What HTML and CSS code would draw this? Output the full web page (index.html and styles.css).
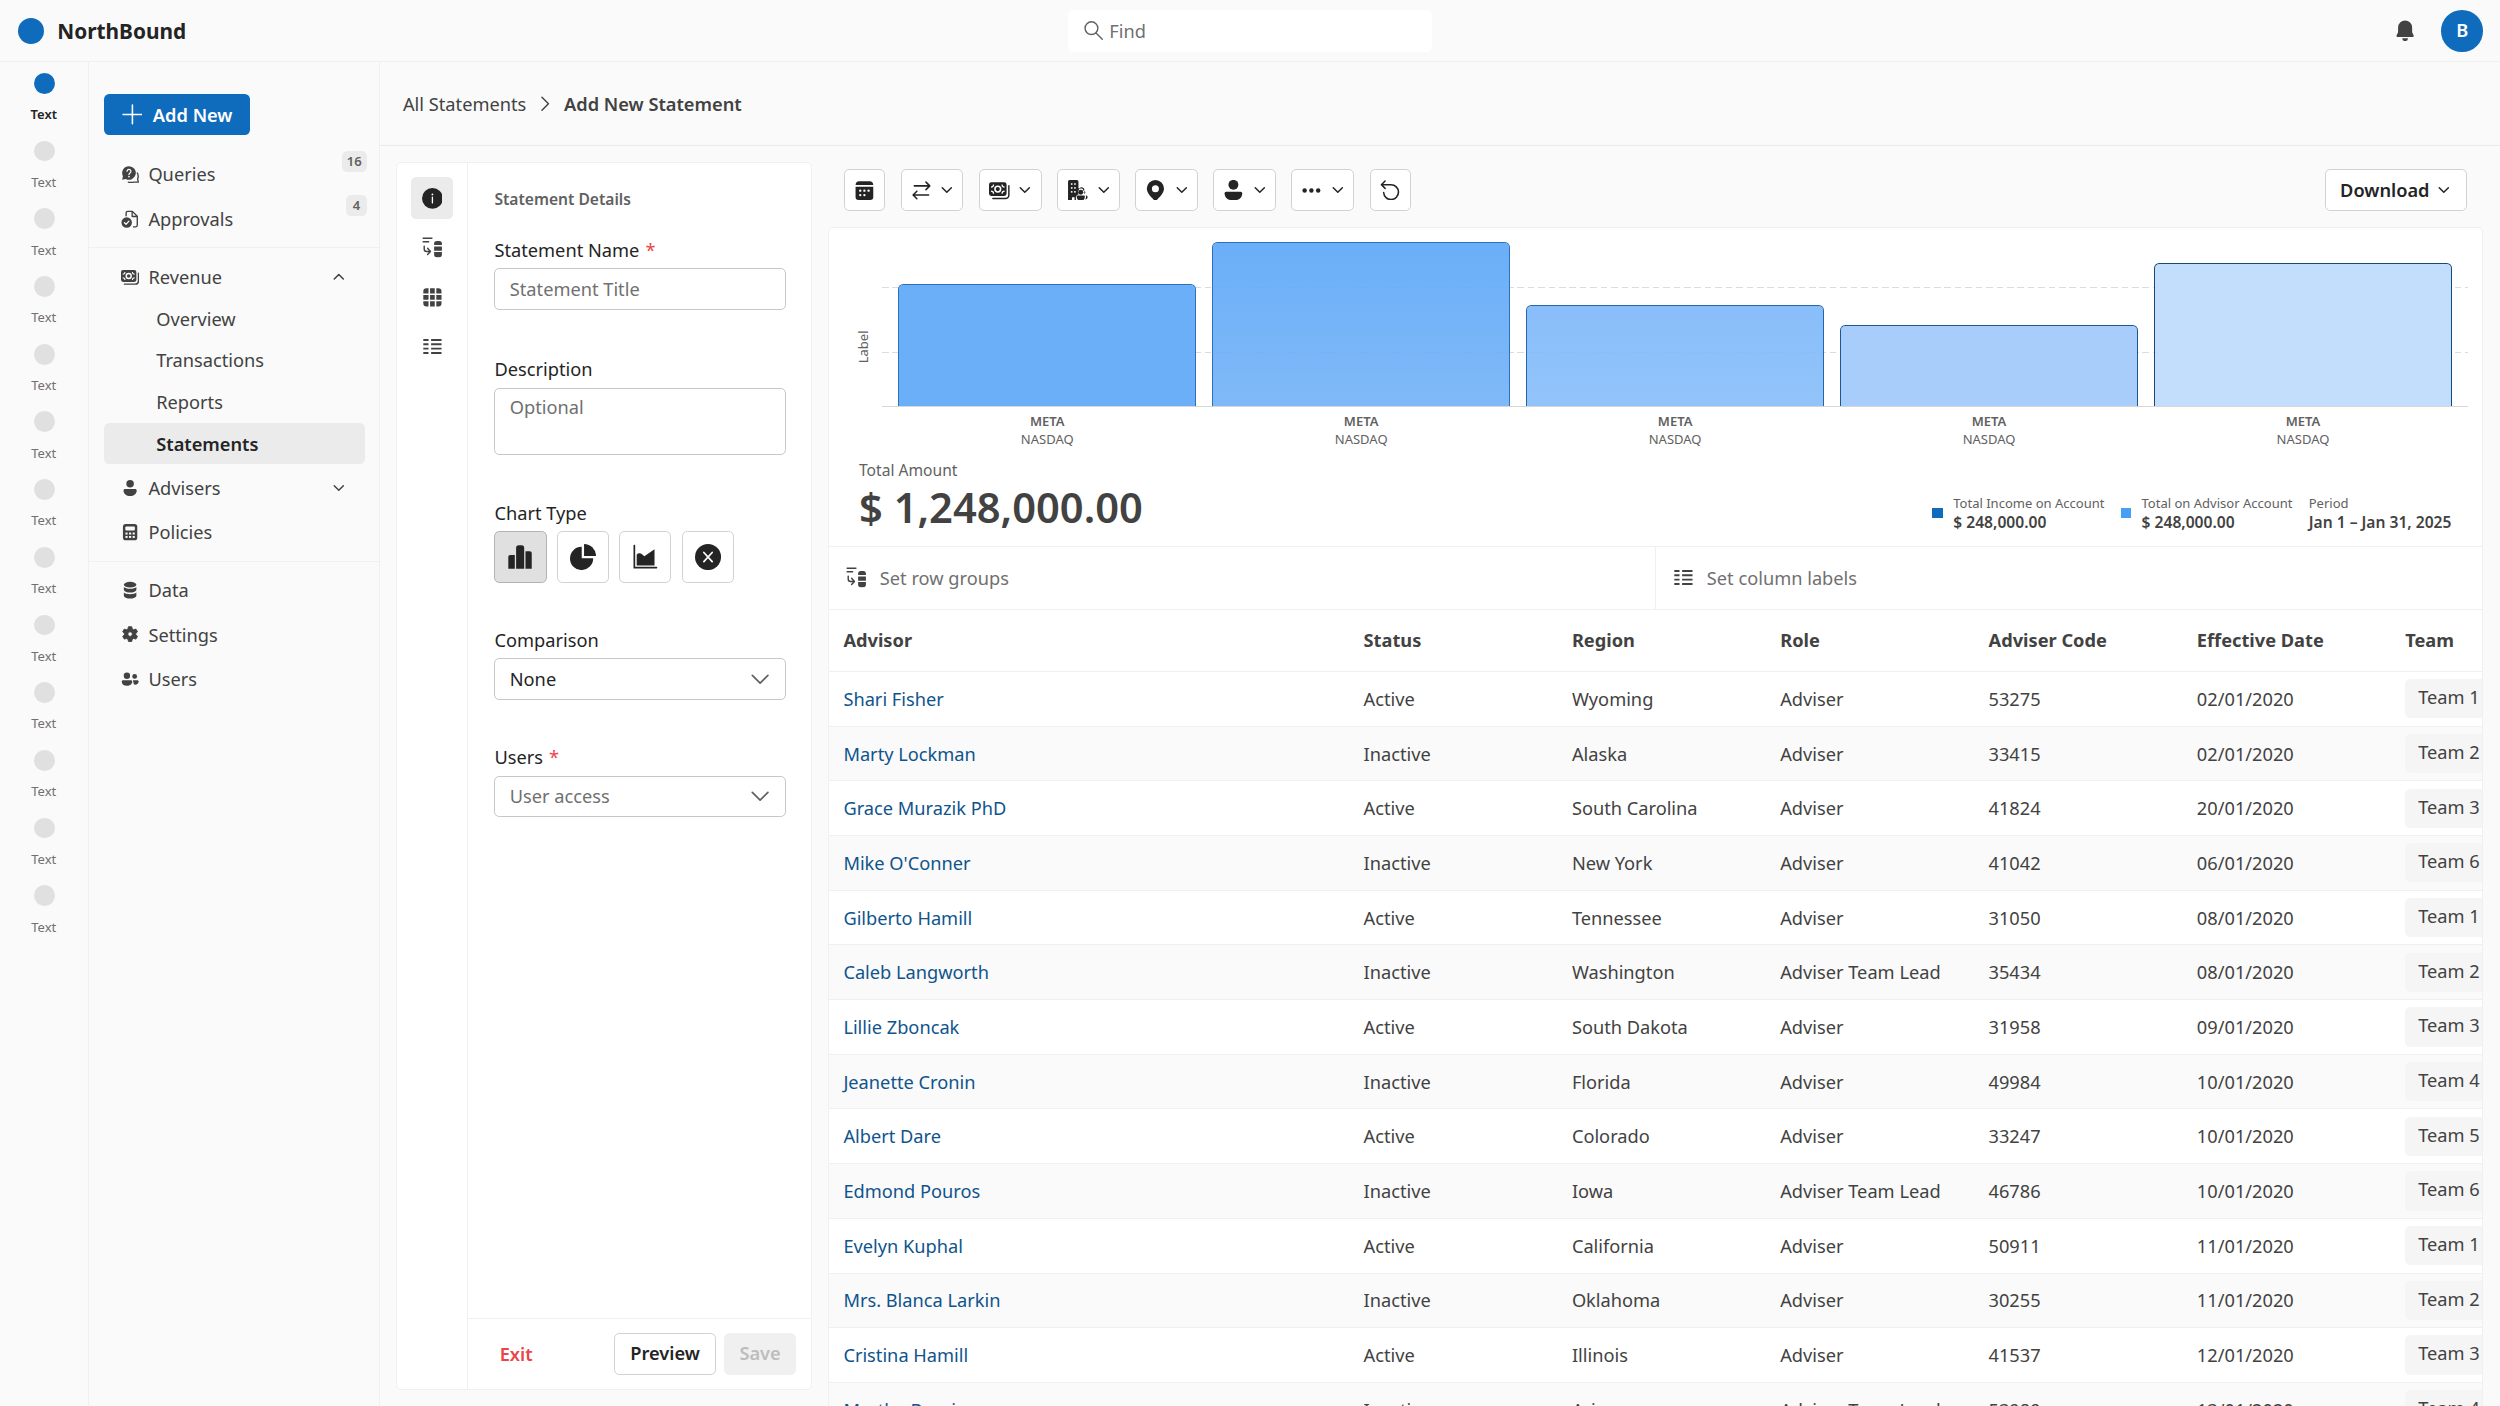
FILE: index.html
```html
<!DOCTYPE html>
<html lang="en">
<head>
    <meta charset="UTF-8">
    <meta name="viewport" content="width=device-width, initial-scale=1.0">
    <title>NorthBound - Add New Statement</title>
    <link rel="stylesheet" href="styles.css">
</head>
<body>
    <!-- Icon sprite -->
    <svg class="sprite" xmlns="http://www.w3.org/2000/svg">
        <symbol id="i-down" viewBox="0 0 12 12"><path d="M2.500 4.400l3.500 3.500 3.500-3.500" fill="none" stroke="currentColor" stroke-width="1.150" stroke-linecap="round" stroke-linejoin="round"/></symbol>
        <symbol id="i-up" viewBox="0 0 12 12"><path d="M2.500 7.700l3.500-3.500 3.500 3.500" fill="none" stroke="currentColor" stroke-width="1.150" stroke-linecap="round" stroke-linejoin="round"/></symbol>
        <symbol id="i-query" viewBox="0 0 16 16">
            <path d="M7 1a6 6 0 0 0-5.300 8.800L1 13l3.200-.7A6 6 0 1 0 7 1z"/>
            <path d="M6 15c3.500.6 7-.2 9.200 0l-.6-2.600c.6-1.500.6-4-.4-5.800" fill="none" stroke="currentColor" stroke-width="1.200" stroke-linejoin="round"/>
            <path d="M5.300 5.500a1.700 1.700 0 1 1 2.600 1.500c-.6.4-.9.700-.9 1.300" fill="none" stroke="#fafafa" stroke-width="1.100" stroke-linecap="round"/>
            <circle cx="7" cy="10.200" r=".75" fill="#fafafa"/>
        </symbol>
        <symbol id="i-approve" viewBox="0 0 16 16">
            <path d="M4.500 5.500V2.500c0-.8.6-1.300 1.300-1.300h4.200l4.300 4.300v8c0 .8-.6 1.300-1.300 1.300h-2.500M9.800 1.500v4.200h4.200" fill="none" stroke="currentColor" stroke-width="1.200" stroke-linejoin="round"/>
            <circle cx="5" cy="11" r="4.600"/>
            <path d="M3 11.200l1.400 1.300 2.600-2.700" fill="none" stroke="#fafafa" stroke-width="1.100" stroke-linecap="round" stroke-linejoin="round"/>
        </symbol>
        <symbol id="i-money" viewBox="0 0 16 16">
            <rect x="0" y="1.800" width="13.500" height="10.400" rx="1.800"/>
            <path d="M15.300 4.500v7a2.700 2.700 0 0 1-2.700 2.700H3" fill="none" stroke="currentColor" stroke-width="1.200" stroke-linecap="round"/>
            <circle cx="6.750" cy="7" r="2.800" fill="#fff"/>
            <circle cx="6.750" cy="7" r="1.600"/>
            <path d="M1.500 5.500a2 2 0 0 0 2-2M10 3.500a2 2 0 0 0 2 2M1.500 8.500a2 2 0 0 1 2 2M10 10.500a2 2 0 0 1 2-2" fill="none" stroke="#fff" stroke-width=".9"/>
        </symbol>
        <symbol id="i-person" viewBox="0 0 16 16"><circle cx="8" cy="4.200" r="3.300"/><path d="M3.600 8.700h8.800c.8 0 1.400.6 1.400 1.400 0 3-2.600 4.900-5.800 4.900s-5.800-1.900-5.800-4.900c0-.8.6-1.400 1.400-1.400z"/></symbol>
        <symbol id="i-calc" viewBox="0 0 16 16">
            <rect x="1.700" y=".8" width="12.600" height="14.400" rx="2.500"/>
            <rect x="3.800" y="3" width="8.400" height="3.600" rx="1" fill="#fafafa"/>
            <g fill="#fafafa"><rect x="3.900" y="8.400" width="1.900" height="1.700"/><rect x="7.050" y="8.400" width="1.900" height="1.700"/><rect x="10.200" y="8.400" width="1.900" height="1.700"/><rect x="3.900" y="11.400" width="1.900" height="1.700"/><rect x="7.050" y="11.400" width="1.900" height="1.700"/><rect x="10.200" y="11.400" width="1.900" height="1.700"/></g>
        </symbol>
        <symbol id="i-data" viewBox="0 0 16 16">
            <ellipse cx="8" cy="3.200" rx="5.500" ry="2.500"/>
            <path d="M2.500 5.200c1 1 3 1.600 5.500 1.600s4.500-.6 5.500-1.600v2.500c0 1.400-2.500 2.500-5.500 2.500s-5.500-1.100-5.500-2.500z"/>
            <path d="M2.500 10.100c1 1 3 1.500 5.500 1.500s4.500-.5 5.500-1.500v2.800c0 1.400-2.500 2.500-5.500 2.500s-5.500-1.100-5.500-2.500z"/>
        </symbol>
        <symbol id="i-gear" viewBox="0 0 16 16">
            <path fill-rule="evenodd" d="M6.600 1.500h2.800l.5 2 1.200.7 2-.6 1.400 2.400-1.500 1.400v1.200l1.500 1.400-1.400 2.400-2-.6-1.200.7-.5 2H6.600l-.5-2-1.200-.7-2 .6L1.500 10 3 8.600V7.400L1.500 6l1.400-2.400 2 .6 1.200-.7zM8 6a2 2 0 1 0 0 4 2 2 0 0 0 0-4z" stroke="currentColor" stroke-width=".8" stroke-linejoin="round"/>
        </symbol>
        <symbol id="i-people" viewBox="0 0 16 16">
            <circle cx="5.200" cy="5" r="2.800"/><circle cx="12" cy="5.600" r="2.100"/>
            <path d="M1.800 8.900h6.900c.7 0 1.200.5 1.200 1.200 0 2.400-2 3.700-4.700 3.700S.6 12.500.6 10.100c0-.7.500-1.200 1.200-1.200zM10.500 8.900h3.800c.7 0 1.200.5 1.200 1.200 0 2-1.700 3.200-4.200 2.700z"/>
        </symbol>
        <symbol id="i-rows" viewBox="0 0 16 16">
            <path d="M.5 1h7.500M.5 3.700h5" fill="none" stroke="currentColor" stroke-width="1.100"/>
            <path d="M1.700 7v2.200c0 1.200.7 1.900 1.900 1.900H6M4.300 8.700l2.200 2.400-2.200 2.400" fill="none" stroke="currentColor" stroke-width="1.100" stroke-linecap="round" stroke-linejoin="round"/>
            <path d="M9.300 6.200V5a2 2 0 0 1 2-2h2a2 2 0 0 1 2 2v1.200zM9.300 7.300h6v3.200h-6zM9.300 11.600h6V13.500a2 2 0 0 1-2 2h-2a2 2 0 0 1-2-2z"/>
        </symbol>
        <symbol id="i-grid" viewBox="0 0 16 16">
            <path d="M3.500 1H5v4H1V3.500A2.500 2.500 0 0 1 3.500 1zM6.200 1h3.600v4H6.200zM11 1h1.500A2.500 2.500 0 0 1 15 3.500V5h-4zM1 6.200h4v3.600H1zM6.200 6.200h3.600v3.600H6.200zM11 6.200h4v3.600h-4zM1 11h4v4H3.500A2.500 2.500 0 0 1 1 12.500zM6.200 11h3.600v4H6.200zM11 11h4v1.500a2.500 2.500 0 0 1-2.500 2.500H11z"/>
        </symbol>
        <symbol id="i-cols" viewBox="0 0 16 16"><path d="M1 3.100h4M7 3.100h8M1 6.400h4M7 6.400h8M1 9.700h4M7 9.700h8M1 13h4M7 13h8" fill="none" stroke="currentColor" stroke-width="1.500"/></symbol>
    </svg>

    <header class="topbar">
        <div class="brand"><span class="brand-dot"></span>NorthBound</div>
        <div class="search">
            <svg viewBox="0 0 16 16"><circle cx="6.500" cy="6.300" r="4.900"/><path d="M10 10l4.800 4.800"/></svg>
            Find
        </div>
        <div class="topbar-right">
            <svg class="bell" viewBox="0 0 14 16"><path d="M7 .3a5.400 5.400 0 0 0-5.400 5.400v3.800L.4 12c-.2.500 0 1 .6 1h12c.6 0 .8-.5.600-1l-1.200-2.500V5.700A5.400 5.400 0 0 0 7 .3zM4.800 14h4.400a2.200 2.200 0 0 1-4.400 0z"/></svg>
            <span class="avatar">B</span>
        </div>
    </header>

    <div class="layout">
        <nav class="rail">
            <div class="rail-item active"><i></i>Text</div>
            <div class="rail-item"><i></i>Text</div>
            <div class="rail-item"><i></i>Text</div>
            <div class="rail-item"><i></i>Text</div>
            <div class="rail-item"><i></i>Text</div>
            <div class="rail-item"><i></i>Text</div>
            <div class="rail-item"><i></i>Text</div>
            <div class="rail-item"><i></i>Text</div>
            <div class="rail-item"><i></i>Text</div>
            <div class="rail-item"><i></i>Text</div>
            <div class="rail-item"><i></i>Text</div>
            <div class="rail-item"><i></i>Text</div>
            <div class="rail-item"><i></i>Text</div>
        </nav>

        <aside class="sidebar">
            <button class="add-new">
                <svg viewBox="0 0 16 16"><path d="M8 .8v14.400M.8 8h14.400"/></svg>
                Add New
            </button>
            <div class="menu">
                <a class="menu-item"><svg class="icon"><use href="#i-query"/></svg>Queries<span class="badge">16</span></a>
                <a class="menu-item"><svg class="icon"><use href="#i-approve"/></svg>Approvals<span class="badge">4</span></a>
            </div>
            <div class="menu">
                <a class="menu-item"><svg class="icon"><use href="#i-money"/></svg>Revenue<svg class="caret"><use href="#i-up"/></svg></a>
                <div class="submenu">
                    <a>Overview</a>
                    <a>Transactions</a>
                    <a>Reports</a>
                    <a class="active">Statements</a>
                </div>
                <a class="menu-item"><svg class="icon"><use href="#i-person"/></svg>Advisers<svg class="caret"><use href="#i-down"/></svg></a>
                <a class="menu-item"><svg class="icon"><use href="#i-calc"/></svg>Policies</a>
            </div>
            <div class="menu">
                <a class="menu-item"><svg class="icon"><use href="#i-data"/></svg>Data</a>
                <a class="menu-item"><svg class="icon"><use href="#i-gear"/></svg>Settings</a>
                <a class="menu-item"><svg class="icon"><use href="#i-people"/></svg>Users</a>
            </div>
        </aside>

        <main class="main">
            <div class="breadcrumb">
                <span>All Statements</span>
                <svg viewBox="0 0 8 12"><path d="M1.500 1l5 5-5 5"/></svg>
                <b>Add New Statement</b>
            </div>

            <div class="content">
                <section class="details">
                    <div class="tabs">
                        <span class="tab active"><svg viewBox="0 0 16 16"><circle cx="8" cy="8" r="8"/><path d="M8 7v4.500" stroke="#fff" stroke-linecap="round"/><circle cx="8" cy="4.900" r=".7" fill="#fff"/></svg></span>
                        <span class="tab"><svg><use href="#i-rows"/></svg></span>
                        <span class="tab"><svg><use href="#i-grid"/></svg></span>
                        <span class="tab"><svg><use href="#i-cols"/></svg></span>
                    </div>
                    <div class="details-body">
                        <form class="form">
                            <h2>Statement Details</h2>
                            <div class="field first">
                                <label>Statement Name <em>*</em></label>
                                <input type="text" placeholder="Statement Title">
                            </div>
                            <div class="field">
                                <label>Description</label>
                                <textarea placeholder="Optional"></textarea>
                            </div>
                            <div class="field">
                                <label>Chart Type</label>
                                <div class="chart-types">
                                    <span class="chart-type active"><svg viewBox="0 0 20 20"><path d="M1 10a1.500 1.500 0 0 1 1.500-1.500H6V19H1zM7 3a2 2 0 0 1 2-2h2.200a2 2 0 0 1 2 2v16H7zM14.200 5.500h3.300A1.500 1.500 0 0 1 19 7v12h-4.800z"/></svg></span>
                                    <span class="chart-type"><svg viewBox="0 0 20 20"><path d="M9 2.200V11h8.800A8.900 8.900 0 1 1 9 2.200z"/><path d="M10.800 0a9.200 9.200 0 0 1 9.200 9.200h-9.200z"/></svg></span>
                                    <span class="chart-type"><svg viewBox="0 0 20 20"><path d="M1.800 1.200v16.900h17" fill="none" stroke="currentColor" stroke-width="1.300" stroke-linecap="round"/><path d="M3.600 8.200c1.400-1.700 3-1.400 4.300-.1l1.600 1.300 7.800-5.300v12.400H3.600z"/></svg></span>
                                    <span class="chart-type"><svg viewBox="0 0 20 20"><circle cx="10" cy="10" r="10"/><path d="M6.800 6.500l6.400 7M13.200 6.500l-6.400 7" stroke="#fff" stroke-width="1.300" stroke-linecap="round"/></svg></span>
                                </div>
                            </div>
                            <div class="field">
                                <label>Comparison</label>
                                <div class="select">None<svg viewBox="0 0 14 8"><path d="M1 1l6 6 6-6"/></svg></div>
                            </div>
                            <div class="field">
                                <label>Users <em>*</em></label>
                                <div class="select empty">User access<svg viewBox="0 0 14 8"><path d="M1 1l6 6 6-6"/></svg></div>
                            </div>
                        </form>
                        <div class="details-footer">
                            <a class="exit">Exit</a>
                            <span class="btn preview">Preview</span>
                            <span class="btn save">Save</span>
                        </div>
                    </div>
                </section>

                <section class="report">
                    <div class="toolbar">
                        <span class="tool small"><svg viewBox="0 0 16 16"><path d="M1.200 3.900A3 3 0 0 1 4 1h8a3 3 0 0 1 2.800 2.900z"/><path d="M1.200 5.200h13.600V13a2.300 2.300 0 0 1-2.300 2.300h-9A2.300 2.300 0 0 1 1.200 13z"/><g fill="#fff"><circle cx="8" cy="8.200" r=".9"/><circle cx="11.200" cy="8.200" r=".9"/><circle cx="4.800" cy="8.200" r=".9"/><circle cx="8" cy="11.600" r=".9"/><circle cx="4.800" cy="11.600" r=".9"/></g></svg></span>
                        <span class="tool"><svg viewBox="0 0 16 16"><path d="M2.500 4.500h11.800M11.500 1.600l2.900 2.900-2.900 2.900M13.500 11.500H1.700M4.500 8.600l-2.900 2.900 2.900 2.900" fill="none" stroke="currentColor" stroke-width="1.200" stroke-linecap="round" stroke-linejoin="round"/></svg><svg class="caret"><use href="#i-down"/></svg></span>
                        <span class="tool"><svg><use href="#i-money"/></svg><svg class="caret"><use href="#i-down"/></svg></span>
                        <span class="tool">
                            <svg viewBox="0 0 16 16">
                                <path d="M.8 1.300C.8.600 1.300 0 2 0h5.500c.8 0 1.300.6 1.300 1.300v5h1.300c-1.500 1.200-2 3-1 4.600C7 11.500 6.400 13 7 15.500H5.800v-2.300H3.800v2.300h-3z"/>
                                <g fill="#fff"><rect x="3" y="2.500" width="1.200" height="1.200"/><rect x="5.500" y="2.500" width="1.200" height="1.200"/><rect x="3" y="5.500" width="1.200" height="1.200"/><rect x="5.500" y="5.500" width="1.200" height="1.200"/><rect x="3" y="8.500" width="1.200" height="1.200"/><rect x="5.500" y="8.500" width="1.200" height="1.200"/></g>
                                <path d="M10.200 6.200c1-.3 2.200 0 2.600.9v1" fill="none" stroke="currentColor"/>
                                <circle cx="10.600" cy="9.400" r="1.900"/><path d="M8.300 12h4.600c.5 0 .8.400.8.900 0 2-1.300 3-3.100 3s-3.100-1-3.100-3c0-.5.3-.9.800-.9z"/><path d="M13.300 8.400a1.300 1.300 0 0 1 0 2.400zM14.500 12h.7c1.300 1 .4 2.900-1.300 3 .6-.8.9-1.700.6-3z"/>
                            </svg>
                            <svg class="caret"><use href="#i-down"/></svg>
                        </span>
                        <span class="tool"><svg viewBox="0 0 16 16"><path fill-rule="evenodd" d="M8 0a6.600 6.600 0 0 0-6.600 6.600c0 3.400 3 6.200 5.700 9 .5.500 1.300.5 1.800 0 2.700-2.800 5.700-5.600 5.700-9A6.600 6.600 0 0 0 8 0zm0 4a2.700 2.700 0 1 1 0 5.400A2.700 2.700 0 0 1 8 4z"/></svg><svg class="caret"><use href="#i-down"/></svg></span>
                        <span class="tool"><svg viewBox="0 0 16 16"><circle cx="8" cy="3.700" r="3.800"/><path d="M2.500 9h11c.8 0 1.300.6 1.300 1.300 0 3.500-3 5.400-6.800 5.400s-6.800-1.900-6.800-5.400C1.200 9.600 1.700 9 2.500 9z"/></svg><svg class="caret"><use href="#i-down"/></svg></span>
                        <span class="tool"><svg viewBox="0 0 16 16"><circle cx="2.800" cy="8" r="1.700"/><circle cx="8" cy="8" r="1.700"/><circle cx="13.200" cy="8" r="1.700"/></svg><svg class="caret"><use href="#i-down"/></svg></span>
                        <span class="tool small"><svg viewBox="0 0 16 16"><path d="M1.200 3.600h7.300a5.700 5.700 0 1 1-5.700 6M3.900.8L1.100 3.600l2.800 2.800" fill="none" stroke="currentColor" stroke-width="1.200" stroke-linecap="round" stroke-linejoin="round"/></svg></span>
                        <span class="tool download">Download<svg class="caret"><use href="#i-down"/></svg></span>
                    </div>

                    <div class="panel">
                        <div class="chart">
                            <div class="axis-label">Label</div>
                            <div class="plot">
                                <div class="bars">
                                    <div class="bar bar-1"></div>
                                    <div class="bar bar-2"></div>
                                    <div class="bar bar-3"></div>
                                    <div class="bar bar-4"></div>
                                    <div class="bar bar-5"></div>
                                </div>
                                <div class="ticks">
                                    <div><b>META</b>NASDAQ</div>
                                    <div><b>META</b>NASDAQ</div>
                                    <div><b>META</b>NASDAQ</div>
                                    <div><b>META</b>NASDAQ</div>
                                    <div><b>META</b>NASDAQ</div>
                                </div>
                            </div>
                        </div>
                        <div class="summary">
                            <div class="total">
                                <span>Total Amount</span>
                                <strong>$ 1,248,000.00</strong>
                            </div>
                            <div class="legend">
                                <i class="key dark"></i>
                                <div>Total Income on Account<b>$ 248,000.00</b></div>
                                <i class="key light"></i>
                                <div>Total on Advisor Account<b>$ 248,000.00</b></div>
                                <div class="period">Period<b>Jan 1 – Jan 31, 2025</b></div>
                            </div>
                        </div>
                        <div class="groups">
                            <div><svg><use href="#i-rows"/></svg>Set row groups</div>
                            <div><svg><use href="#i-cols"/></svg>Set column labels</div>
                        </div>
                        <table class="table">
                            <colgroup><col class="col-name"><col><col><col><col><col><col></colgroup>
                            <thead>
                                <tr><th>Advisor</th><th>Status</th><th>Region</th><th>Role</th><th>Adviser Code</th><th>Effective Date</th><th>Team</th></tr>
                            </thead>
                            <tbody>
                                <tr><td><a>Shari Fisher</a></td><td>Active</td><td>Wyoming</td><td>Adviser</td><td>53275</td><td>02/01/2020</td><td><span class="chip">Team 1</span></td></tr>
                                <tr><td><a>Marty Lockman</a></td><td>Inactive</td><td>Alaska</td><td>Adviser</td><td>33415</td><td>02/01/2020</td><td><span class="chip">Team 2</span></td></tr>
                                <tr><td><a>Grace Murazik PhD</a></td><td>Active</td><td>South Carolina</td><td>Adviser</td><td>41824</td><td>20/01/2020</td><td><span class="chip">Team 3</span></td></tr>
                                <tr><td><a>Mike O'Conner</a></td><td>Inactive</td><td>New York</td><td>Adviser</td><td>41042</td><td>06/01/2020</td><td><span class="chip">Team 6</span></td></tr>
                                <tr><td><a>Gilberto Hamill</a></td><td>Active</td><td>Tennessee</td><td>Adviser</td><td>31050</td><td>08/01/2020</td><td><span class="chip">Team 1</span></td></tr>
                                <tr><td><a>Caleb Langworth</a></td><td>Inactive</td><td>Washington</td><td>Adviser Team Lead</td><td>35434</td><td>08/01/2020</td><td><span class="chip">Team 2</span></td></tr>
                                <tr><td><a>Lillie Zboncak</a></td><td>Active</td><td>South Dakota</td><td>Adviser</td><td>31958</td><td>09/01/2020</td><td><span class="chip">Team 3</span></td></tr>
                                <tr><td><a>Jeanette Cronin</a></td><td>Inactive</td><td>Florida</td><td>Adviser</td><td>49984</td><td>10/01/2020</td><td><span class="chip">Team 4</span></td></tr>
                                <tr><td><a>Albert Dare</a></td><td>Active</td><td>Colorado</td><td>Adviser</td><td>33247</td><td>10/01/2020</td><td><span class="chip">Team 5</span></td></tr>
                                <tr><td><a>Edmond Pouros</a></td><td>Inactive</td><td>Iowa</td><td>Adviser Team Lead</td><td>46786</td><td>10/01/2020</td><td><span class="chip">Team 6</span></td></tr>
                                <tr><td><a>Evelyn Kuphal</a></td><td>Active</td><td>California</td><td>Adviser</td><td>50911</td><td>11/01/2020</td><td><span class="chip">Team 1</span></td></tr>
                                <tr><td><a>Mrs. Blanca Larkin</a></td><td>Inactive</td><td>Oklahoma</td><td>Adviser</td><td>30255</td><td>11/01/2020</td><td><span class="chip">Team 2</span></td></tr>
                                <tr><td><a>Cristina Hamill</a></td><td>Active</td><td>Illinois</td><td>Adviser</td><td>41537</td><td>12/01/2020</td><td><span class="chip">Team 3</span></td></tr>
                                <tr><td><a>Martha Bernier</a></td><td>Inactive</td><td>Arizona</td><td>Adviser Team Lead</td><td>53989</td><td>13/01/2020</td><td><span class="chip">Team 4</span></td></tr>
                            </tbody>
                        </table>
                    </div>
                </section>
            </div>
        </main>
    </div>
</body>
</html>
```
FILE: styles.css
```css
* {
    margin: 0;
    padding: 0;
    box-sizing: border-box;
}

/* 1rem = 10px on a 1920px wide screen */
html {
    font-size: 0.5208333vw;
}

body {
    font-family: 'Noto Sans', sans-serif;
    font-size: 1.4rem;
    line-height: 2rem;
    color: #424242;
    background-color: #fafafa;
    height: 100vh;
    overflow: hidden;
    display: flex;
    flex-direction: column;
}

svg {
    fill: currentColor;
    flex-shrink: 0;
    width: 1.6rem;
    height: 1.6rem;
}

b, strong {
    font-weight: 600;
}

.sprite {
    display: none;
}

/* Top bar */
.topbar {
    height: 4.8rem;
    flex-shrink: 0;
    padding: 0 1.3rem 0 1.4rem;
    border-bottom: 0.1rem solid #f0f0f0;
    display: flex;
    align-items: center;
    justify-content: space-between;
}

.brand, .topbar-right {
    flex: 1;
    display: flex;
    align-items: center;
}

.brand {
    gap: 1rem;
    font-size: 1.6rem;
    font-weight: 700;
    color: #242424;
}

.brand-dot {
    width: 2rem;
    height: 2rem;
    border-radius: 50%;
    background-color: #0f6cbd;
}

.search {
    width: 28rem;
    height: 3.2rem;
    margin-right: 0.1rem;
    padding-left: 1.2rem;
    border-radius: 0.4rem;
    background-color: #fff;
    color: #707070;
    display: flex;
    align-items: center;
    gap: 0.4rem;
}

.search svg {
    fill: none;
    stroke: #616161;
    stroke-width: 1.1;
    stroke-linecap: round;
}

.topbar-right {
    justify-content: flex-end;
    gap: 2.1rem;
}

.bell {
    width: 1.4rem;
}

.avatar {
    width: 3.2rem;
    height: 3.2rem;
    border-radius: 50%;
    background-color: #0f6cbd;
    color: #fff;
    font-weight: 600;
    line-height: 3.2rem;
    text-align: center;
}

.layout {
    flex: 1;
    min-height: 0;
    display: flex;
}

/* Left rail */
.rail {
    width: 6.8rem;
    flex-shrink: 0;
    border-right: 0.1rem solid #f0f0f0;
}

.rail-item {
    height: 5.2rem;
    padding-top: 0.8rem;
    display: flex;
    flex-direction: column;
    align-items: center;
    gap: 0.8rem;
    font-size: 1rem;
    line-height: 1.6rem;
    color: #707070;
}

.rail-item i {
    width: 1.6rem;
    height: 1.6rem;
    margin-left: 0.1rem;
    border-radius: 50%;
    background-color: #e0e0e0;
}

.rail-item.active {
    font-weight: 600;
    color: #242424;
}

.rail-item.active i {
    background-color: #0f6cbd;
}

/* Sidebar */
.sidebar {
    width: 22.4rem;
    flex-shrink: 0;
    padding-top: 2.4rem;
    border-right: 0.1rem solid #f0f0f0;
}

.add-new {
    width: 11.2rem;
    height: 3.2rem;
    margin: 0 0 0.8rem 1.2rem;
    border: none;
    border-radius: 0.4rem;
    background-color: #0f6cbd;
    color: #fff;
    font: 600 1.4rem 'Noto Sans', sans-serif;
    display: flex;
    align-items: center;
    justify-content: center;
    gap: 0.8rem;
}

.add-new svg {
    stroke: #fff;
    stroke-width: 1.2;
    stroke-linecap: round;
}

.menu {
    padding: 0.6rem 1.1rem 0.6rem 1.2rem;
    display: flex;
    flex-direction: column;
    gap: 0.2rem;
}

.menu + .menu {
    border-top: 0.1rem solid #f0f0f0;
}

.menu-item {
    position: relative;
    height: 3.2rem;
    padding: 0 1.4rem 0 1.3rem;
    display: flex;
    align-items: center;
}

.menu-item .icon {
    width: 1.4rem;
    height: 1.4rem;
    margin-right: 0.7rem;
}

.caret {
    width: 1.2rem;
    height: 1.2rem;
}

.menu-item .caret {
    margin-left: auto;
}

.badge {
    position: absolute;
    top: -0.2rem;
    right: -0.15rem;
    min-width: 1.6rem;
    height: 1.6rem;
    padding: 0 0.4rem;
    border-radius: 0.4rem;
    background-color: #ebebeb;
    color: #616161;
    font-size: 1rem;
    font-weight: 600;
    line-height: 1.6rem;
    text-align: center;
}

.submenu {
    margin-top: -0.2rem;
}

.submenu a {
    display: block;
    height: 3.2rem;
    padding-left: 4rem;
    border-radius: 0.4rem;
    line-height: 3.3rem;
}

.submenu .active {
    background-color: #ebebeb;
    color: #242424;
    font-weight: 600;
}

/* Main area */
.main {
    flex: 1;
    min-width: 0;
    display: flex;
    flex-direction: column;
}

.breadcrumb {
    height: 6.4rem;
    flex-shrink: 0;
    padding-left: 1.75rem;
    border-bottom: 0.1rem solid #ebebeb;
    display: flex;
    align-items: center;
    gap: 1.05rem;
}

.breadcrumb svg {
    width: 0.8rem;
    height: 1.2rem;
    fill: none;
    stroke: currentColor;
    stroke-width: 1.1;
    stroke-linecap: round;
    stroke-linejoin: round;
}

.content {
    flex: 1;
    min-height: 0;
    padding: 0 1.3rem 0 1.2rem;
    display: flex;
    gap: 1.2rem;
}

/* Statement details */
.details {
    width: 32rem;
    flex-shrink: 0;
    margin: 1.25rem 0 1.2rem;
    border: 0.1rem solid #f0f0f0;
    border-radius: 0.4rem;
    background-color: #fff;
    display: flex;
}

.tabs {
    width: 5.5rem;
    padding: 1.1rem;
    border-right: 0.1rem solid #f0f0f0;
    display: flex;
    flex-direction: column;
    gap: 0.6rem;
}

.tab {
    width: 3.2rem;
    height: 3.2rem;
    border-radius: 0.4rem;
    display: flex;
    align-items: center;
    justify-content: center;
}

.tab.active {
    background-color: #ebebeb;
    color: #242424;
}

.details-body {
    flex: 1;
    display: flex;
    flex-direction: column;
}

.form {
    flex: 1;
    padding: 1.75rem 1.9rem 0 2rem;
}

.form h2 {
    font-size: 1.2rem;
    font-weight: 600;
    line-height: 2rem;
    color: #616161;
}

.field {
    margin-top: 3.4rem;
    color: #242424;
}

.field.first {
    margin: 1.9rem 0 3.6rem;
}

.field.first + .field {
    margin-top: 0;
}

.field label {
    display: block;
    margin-bottom: 0.4rem;
}

.field em {
    font-style: normal;
    color: #eb4448;
    margin-left: 0.1rem;
}

.field input, .field textarea, .select {
    display: flex;
    width: 22.4rem;
    height: 3.2rem;
    padding: 0 1.1rem;
    border: 0.1rem solid #c7c7c7;
    border-radius: 0.4rem;
    background-color: #fff;
    font: 1.4rem 'Noto Sans', sans-serif;
    color: #242424;
    resize: none;
}

.field textarea {
    height: 5.2rem;
    padding-top: 0.4rem;
    line-height: 2rem;
}

.field ::placeholder {
    color: #707070;
}

.field .select {
    padding-right: 1.2rem;
    align-items: center;
    justify-content: space-between;
}

.field .empty {
    color: #707070;
}

.select svg {
    width: 1.4rem;
    height: 0.8rem;
    fill: none;
    stroke: #616161;
    stroke-width: 1.3;
    stroke-linecap: round;
    stroke-linejoin: round;
}

.chart-types {
    display: flex;
    gap: 0.8rem;
}

.chart-type {
    width: 4rem;
    height: 4rem;
    border: 0.1rem solid #d1d1d1;
    border-radius: 0.4rem;
    display: flex;
    align-items: center;
    justify-content: center;
}

.chart-type svg {
    width: 2rem;
    height: 2rem;
}

.chart-type.active {
    background-color: #e0e0e0;
    border-color: #b3b3b3;
}

.details-footer {
    height: 5.5rem;
    padding: 0 1.15rem 0 2.4rem;
    border-top: 0.1rem solid #f0f0f0;
    display: flex;
    align-items: center;
    font-weight: 600;
}

.exit {
    margin-right: auto;
    color: #eb4448;
}

.btn {
    height: 3.2rem;
    border: 0.1rem solid #d1d1d1;
    border-radius: 0.4rem;
    line-height: 3rem;
    text-align: center;
}

.preview {
    width: 7.8rem;
    margin-right: 0.6rem;
    color: #242424;
}

.save {
    width: 5.6rem;
    border-color: #f0f0f0;
    background-color: #f0f0f0;
    color: #bdbdbd;
}

/* Report */
.report {
    flex: 1;
    min-width: 0;
    display: flex;
    flex-direction: column;
}

.toolbar {
    padding: 1.8rem 1.25rem 1.25rem 1.2rem;
    display: flex;
    gap: 1.2rem;
}

.tool {
    width: 4.8rem;
    height: 3.2rem;
    border: 0.1rem solid #d1d1d1;
    border-radius: 0.4rem;
    background-color: #fff;
    color: #242424;
    display: flex;
    align-items: center;
    justify-content: center;
    gap: 0.6rem;
}

.tool:not(.small):not(.download) {
    padding-left: 0.1rem;
}

.tool.small {
    width: 3.2rem;
}

.tool.download {
    width: 10.9rem;
    margin-left: auto;
    gap: 0.5rem;
    font-weight: 600;
}

.panel {
    flex: 1;
    min-height: 0;
    overflow: hidden;
    border: 0.1rem solid #f0f0f0;
    border-bottom: none;
    border-radius: 0.4rem 0.4rem 0 0;
    background-color: #fff;
}

.chart {
    height: 17.3rem;
    padding: 1.15rem 1.1rem 0 1.9rem;
    display: flex;
}

.axis-label {
    height: 16rem;
    width: 1.4rem;
    margin-right: 0.8rem;
    writing-mode: vertical-rl;
    transform: rotate(180deg);
    text-align: center;
    font-size: 1rem;
    line-height: 1.4rem;
    color: #616161;
}

.plot {
    flex: 1;
}

/* Dashed grid lines sit behind the translucent bars */
.bars {
    height: 12.6rem;
    padding: 0 1.2rem;
    border-bottom: 0.1rem solid #d6d6d6;
    background-image: repeating-linear-gradient(90deg, #dadde0 0 0.5rem, transparent 0.5rem 0.8rem), repeating-linear-gradient(90deg, #dadde0 0 0.5rem, transparent 0.5rem 0.8rem);
    background-size: 100% 0.1rem;
    background-position: 0 3.4rem, 0 8.4rem;
    background-repeat: no-repeat;
    display: flex;
    align-items: flex-end;
    gap: 1.2rem;
}

.bar {
    flex: 1;
    border: 0.1rem solid #2a70bd;
    border-bottom: none;
    border-radius: 0.4rem 0.4rem 0 0;
    background-clip: padding-box;
}

.bar-1 {
    height: 9.4rem;
    background-color: rgba(94, 168, 248, 0.92);
}

.bar-2 {
    height: 12.6rem;
    background-image: linear-gradient(rgba(94, 168, 248, 0.92), rgba(117, 179, 247, 0.92));
}

.bar-3 {
    height: 7.8rem;
    border-color: #2565ac;
    background-image: linear-gradient(rgba(126, 184, 249, 0.92), rgba(137, 191, 249, 0.92));
}

.bar-4 {
    height: 6.2rem;
    border-color: #1c5898;
    background-color: rgba(162, 201, 251, 0.92);
}

.bar-5 {
    height: 11rem;
    border-color: #154a78;
    background-color: rgba(190, 219, 252, 0.92);
}

.ticks {
    padding: 0.45rem 1.2rem 0;
    display: flex;
    gap: 1.2rem;
}

.ticks div {
    flex: 1;
    text-align: center;
    font-size: 1rem;
    line-height: 1.35rem;
    color: #616161;
}

.ticks b {
    display: block;
}

.summary {
    height: 7.2rem;
    padding: 0.5rem 2.35rem 0 2.3rem;
    border-bottom: 0.1rem solid #f0f0f0;
    display: flex;
    justify-content: space-between;
    align-items: flex-start;
}

.total span {
    display: block;
    font-size: 1.2rem;
    line-height: 1.6rem;
    color: #616161;
}

.total strong {
    display: block;
    font-size: 3.2rem;
    line-height: 4rem;
}

.legend {
    margin-top: 2.6rem;
    display: flex;
    align-items: center;
    font-size: 1rem;
    line-height: 1.4rem;
    color: #616161;
}

.legend b {
    display: block;
    font-size: 1.2rem;
    font-weight: 650;
    line-height: 1.6rem;
    color: #424242;
}

.key {
    width: 0.8rem;
    height: 0.8rem;
    margin: 0 0.8rem 0 1.25rem;
}

.key.dark {
    background-color: #0f6cbd;
}

.key.light {
    background-color: #479ef5;
}

.period {
    margin-left: 1.25rem;
}

.groups {
    height: 4.8rem;
    border-bottom: 0.1rem solid #f0f0f0;
    display: flex;
    color: #707070;
}

.groups div {
    flex: 1;
    padding-left: 1.3rem;
    display: flex;
    align-items: center;
    gap: 1rem;
}

.groups div + div {
    border-left: 0.1rem solid #f0f0f0;
}

.groups svg {
    color: #424242;
}

/* Table */
.table {
    width: 135.95rem;
    table-layout: fixed;
    border-spacing: 0;
}

.table col {
    width: 16rem;
}

.table .col-name {
    width: 39.95rem;
}

.table th, .table td {
    height: 4.2rem;
    padding: 0 1.1rem;
    border-bottom: 0.1rem solid #f0f0f0;
    text-align: left;
    white-space: nowrap;
}

.table th {
    height: 4.8rem;
    font-weight: 700;
}

.table tbody tr:nth-child(even) {
    background-color: #fafafa;
}

.table a {
    color: #0f548c;
}

.chip {
    display: inline-block;
    height: 3rem;
    padding: 0 1rem;
    border-radius: 0.4rem;
    background-color: #f5f5f5;
    line-height: 2.8rem;
    vertical-align: middle;
}
```
